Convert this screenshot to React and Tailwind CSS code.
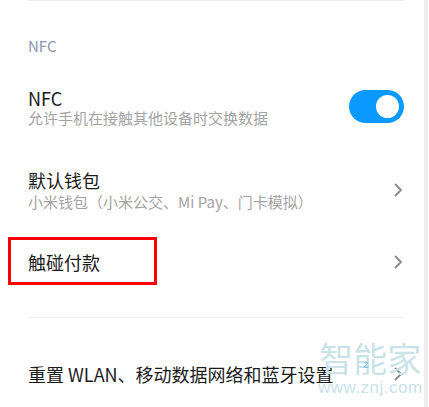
import React from 'react';

const font = { fontFamily: '"Noto Sans CJK SC", "Noto Sans", sans-serif' };

function Chevron() {
    return (
        <svg width="10" height="14" viewBox="0 0 10 14" className="shrink-0">
            <polyline points="2.5,1.5 8,7 2.5,12.5" fill="none" stroke="#8a8a8a" strokeWidth="1.8" strokeLinecap="round" strokeLinejoin="round" />
        </svg>
    );
}

function Toggle() {
    return (
        <div className="flex h-[33px] w-[55px] items-center justify-end rounded-full bg-[#0a99ff] pr-[5px]">
            <div className="h-[23px] w-[23px] rounded-full bg-white" />
        </div>
    );
}

export default function App() {
    return (
        <div className="relative flex h-[407px] w-[429px] overflow-hidden bg-white" style={font}>
            {/* Main list */}
            <div className="w-[424px] pl-[28px] pr-[20px]">
                <div className="h-px bg-[#eeeeee]" />

                {/* Section header */}
                <div className="pt-[36px] text-[15px] leading-[18px] text-[#8d95b3]">NFC</div>

                {/* NFC switch */}
                <div className="mt-[32px] flex items-center justify-between">
                    <div>
                        <div className="text-[18px] leading-[22px] text-[#1b1b1b]">NFC</div>
                        <div className="text-[15px] leading-[17px] text-[#a3a3a3]">允许手机在接触其他设备时交换数据</div>
                    </div>
                    <Toggle />
                </div>

                {/* Default wallet */}
                <div className="mt-[43px] flex items-center justify-between pr-[1px]">
                    <div>
                        <div className="text-[18px] leading-[22px] text-[#1b1b1b]">默认钱包</div>
                        <div className="mt-[2px] text-[15px] leading-[18px] text-[#a3a3a3]">小米钱包（小米公交、Mi Pay、门卡模拟）</div>
                    </div>
                    <Chevron />
                </div>

                {/* Tap to pay */}
                <div className="relative mt-[40px] flex items-center justify-between pr-[1px]">
                    <div className="text-[18px] leading-[22px] text-[#1b1b1b]">触碰付款</div>
                    <Chevron />
                    <div className="absolute left-[-20px] top-[-14px] h-[48px] w-[149px] border-[3px] border-[#ff0000]" />
                </div>

                <div className="mt-[44px] h-px bg-[#eeeeee]" />

                {/* Reset */}
                <div className="mt-[45px] flex items-center justify-between pr-[1px]">
                    <div className="text-[18px] leading-[22px] text-[#1b1b1b]">重置 WLAN、移动数据网络和蓝牙设置</div>
                    <Chevron />
                </div>
            </div>

            {/* Scroll strip */}
            <div className="w-[4px] bg-[#efefef]" />
            <div className="w-[1px]" />

            {/* Watermark */}
            <div className="absolute left-[318px] top-[337px] flex flex-col items-center text-[#c9e3e8]">
                <div className="text-[34px] leading-[42px]">智能家</div>
                <div className="text-[17px] leading-[17px] tracking-[0.5px]" style={{ fontFamily: '"Liberation Sans", sans-serif' }}>www.znj.com</div>
                <svg width="6" height="6" viewBox="0 0 6 6" className="absolute left-[45px] top-[25px]">
                    <polyline points="0.5,0.8 5,0.8 0.8,5.2 5.5,5.2" fill="none" stroke="#59b6e6" strokeWidth="0.8" />
                </svg>
            </div>
        </div>
    );
}
